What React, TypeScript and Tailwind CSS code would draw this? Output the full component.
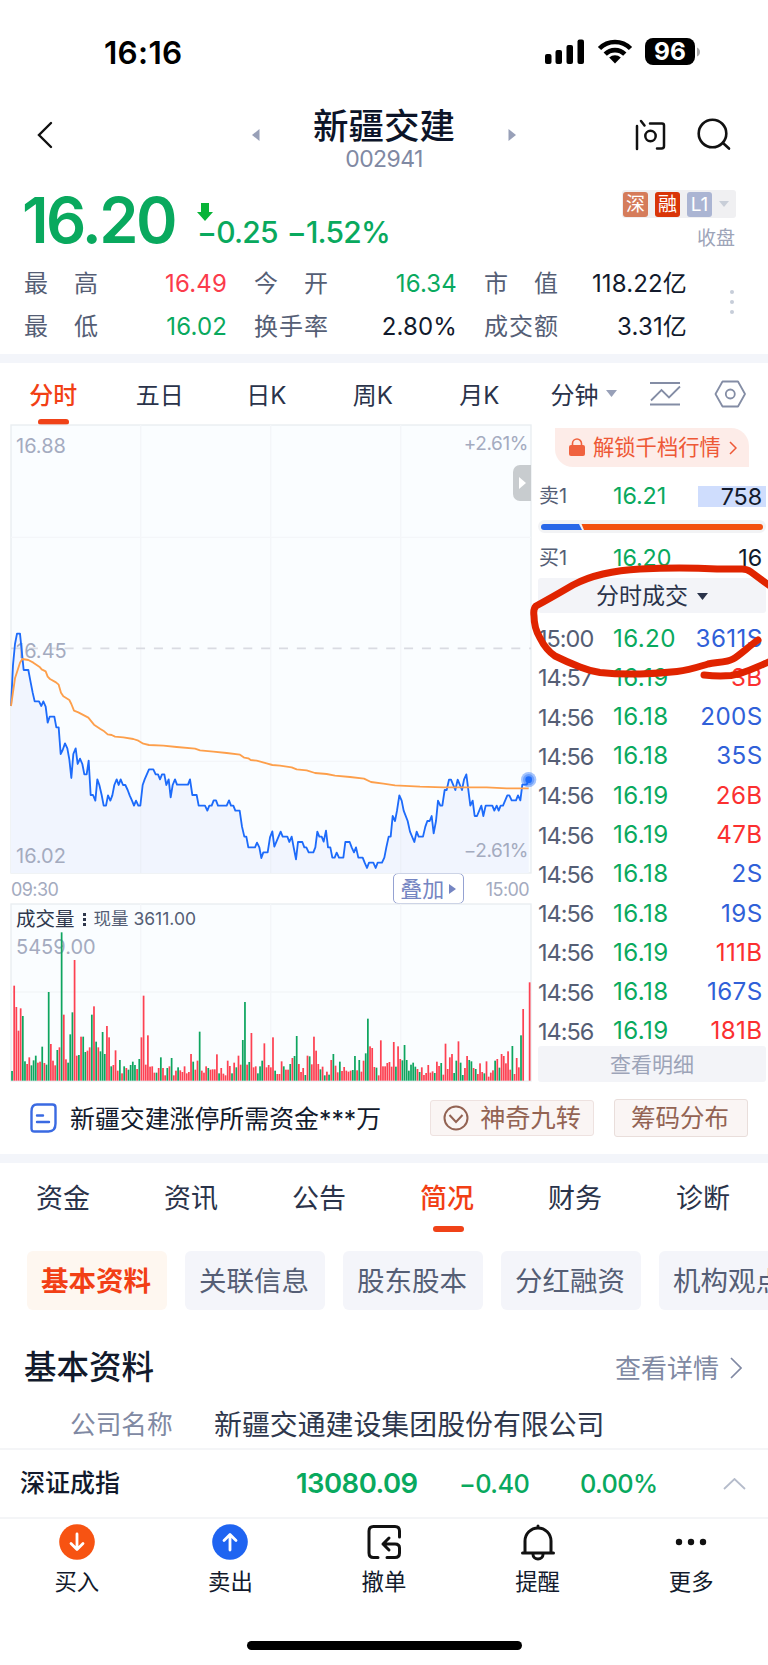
import type { ReactNode } from 'react'
import clsx from 'clsx'

interface Trade {
    time: string; price: string; volume: string; side: 'S' | 'B'
}

const quotes = [
    { label: ['最', '高'], value: '16.49', color: 'text-[#fb3b4b]' },
    { label: ['今', '开'], value: '16.34', color: 'text-[#09a95e]' },
    { label: ['市', '值'], value: '118.22亿', color: 'text-[#121a2c]' },
    { label: ['最', '低'], value: '16.02', color: 'text-[#09a95e]' },
    { label: ['换', '手', '率'], value: '2.80%', color: 'text-[#121a2c]' },
    { label: ['成', '交', '额'], value: '3.31亿', color: 'text-[#121a2c]' },
]

const periods = ['分时', '五日', '日K', '周K', '月K']

const trades: Trade[] = [
    { time: '15:00', price: '16.20', volume: '3611', side: 'S' },
    { time: '14:57', price: '16.19', volume: '3', side: 'B' },
    { time: '14:56', price: '16.18', volume: '200', side: 'S' },
    { time: '14:56', price: '16.18', volume: '35', side: 'S' },
    { time: '14:56', price: '16.19', volume: '26', side: 'B' },
    { time: '14:56', price: '16.19', volume: '47', side: 'B' },
    { time: '14:56', price: '16.18', volume: '2', side: 'S' },
    { time: '14:56', price: '16.18', volume: '19', side: 'S' },
    { time: '14:56', price: '16.19', volume: '111', side: 'B' },
    { time: '14:56', price: '16.18', volume: '167', side: 'S' },
    { time: '14:56', price: '16.19', volume: '181', side: 'B' },
]

const sections = ['资金', '资讯', '公告', '简况', '财务', '诊断']
const topics = ['基本资料', '关联信息', '股东股本', '分红融资', '机构观点']

const priceLine = '33,858 39,735 45,672 51,641 60,641 66,700 71,750 85,750 92,787 98,818 104,844 117,844 124,858 130,844 137,860 143,908 149,890 163,890 169,922 176,922 182,1002 188,990 195,970 202,985 208,1018 214,1074 220,1002 227,985 233,1032 240,1016 247,1032 253,1063 260,1063 266,1022 272,1125 279,1125 286,1142 292,1078 298,1095 305,1125 311,1157 318,1157 324,1126 331,1142 337,1126 343,1095 350,1078 356,1095 362,1078 369,1095 376,1095 383,1110 389,1126 396,1142 402,1157 408,1142 415,1157 421,1157 428,1095 434,1078 447,1048 460,1048 467,1063 474,1063 480,1078 486,1063 493,1063 499,1095 506,1078 512,1132 518,1095 525,1078 531,1094 564,1094 570,1078 577,1125 590,1125 596,1157 615,1157 622,1172 628,1157 635,1157 641,1141 648,1141 654,1157 680,1157 687,1141 693,1157 700,1157 706,1172 719,1172 726,1220 733,1250 739,1250 745,1282 765,1282 771,1268 778,1282 784,1314 790,1297 803,1297 810,1252 817,1234 823,1280 842,1235 848,1250 862,1250 868,1266 875,1250 881,1282 888,1318 894,1266 907,1266 913,1282 919,1282 926,1297 940,1297 946,1282 952,1235 958,1250 965,1250 971,1265 978,1232 984,1282 991,1282 997,1313 1004,1313 1010,1298 1017,1313 1030,1313 1036,1266 1049,1266 1055,1282 1062,1297 1068,1282 1075,1313 1088,1313 1094,1328 1101,1344 1107,1328 1120,1328 1127,1344 1133,1328 1146,1328 1153,1313 1159,1282 1166,1250 1172,1250 1178,1188 1185,1203 1191,1172 1198,1126 1205,1142 1211,1172 1223,1203 1230,1235 1243,1266 1250,1235 1256,1250 1269,1250 1276,1220 1282,1203 1289,1203 1295,1188 1301,1240 1308,1203 1314,1142 1321,1157 1327,1157 1334,1110 1340,1110 1347,1079 1353,1079 1366,1110 1373,1079 1386,1110 1392,1079 1399,1063 1405,1110 1411,1157 1418,1142 1424,1188 1431,1188 1444,1157 1450,1188 1457,1157 1477,1157 1483,1172 1490,1157 1496,1172 1502,1157 1509,1157 1522,1126 1528,1126 1535,1141 1548,1141 1554,1126 1561,1141 1567,1094 1580,1094 1586,1079'
const averageLine = '33,858 45,775 53,750 60,728 67,717 85,720 100,728 120,742 125,748 137,754 143,770 150,777 168,787 176,794 183,818 190,829 208,840 214,852 222,872 235,877 265,893 282,914 300,926 310,932 323,943 335,945 345,950 370,952 400,957 415,962 430,971 447,975 490,977 530,981 585,986 600,991 640,995 680,999 720,1004 733,1013 745,1015 752,1020 770,1022 800,1030 817,1035 840,1037 875,1042 890,1048 920,1051 945,1059 980,1062 1005,1067 1050,1071 1092,1076 1113,1086 1150,1091 1185,1096 1260,1100 1330,1102 1460,1102 1520,1105 1586,1105'

// one entry per minute, r = up, g = down
const volumes = ('g29 r285 r221 r150 r217 g194 g58 r50 r70 g46 g61 g75 r54 r57 g102 r53 g48 g266 r110 r60 r46 g92 r100 g445 r198 r64 g54 g139 g205 r362 '
    + 'r75 g77 r132 g132 g86 r90 r100 g198 r223 g117 r100 g88 g146 g80 r164 r130 g43 r47 r91 r30 g62 r22 g43 r38 g33 g47 g57 g47 r35 g65 '
    + 'r130 r255 r48 r136 r42 r43 r24 g24 r38 g70 r38 r16 g38 r43 g68 r16 r30 g40 r31 r26 r43 r22 r26 r80 g57 r33 r60 g147 r30 r24 '
    + 'r43 g38 r33 r34 r34 r79 g22 r38 r21 r16 r60 r44 g22 r54 g40 r75 r48 g122 g236 r48 g56 r143 r40 r43 g22 g43 g60 r112 r40 r47 '
    + 'r40 r130 g30 r20 r20 r58 g43 r33 r33 g50 r68 g74 g134 r50 r26 r38 g17 r75 g73 r49 r132 r90 r50 g34 r42 g16 r27 g18 r62 g80 '
    + 'r45 r25 g57 r29 r41 r30 r27 r30 g32 g74 r31 g62 r27 r60 g82 g186 r103 r98 r41 g39 r16 r121 r43 r43 r53 r56 r42 r116 g42 r103 '
    + 'r65 g61 g107 g62 g30 g48 g54 g42 r35 g26 r40 r17 r23 r47 r24 r28 g23 r57 r44 g53 r18 r111 r35 r70 r80 g23 g60 r118 g54 g17 '
    + 'r38 r74 g62 g58 r38 g35 r20 r52 r26 g22 r58 r12 r24 r31 g60 r65 g39 r80 r74 r52 r88 r33 g104 r20 r68 r40 g136 r215 r0 r0 r295').split(' ')

function StatusBar() {
    return (
        <div className="h-[98px] pl-[104px] pr-[68px] pt-[33px] flex justify-between items-start">
            <span className="text-[31.500px] leading-[40px] font-semibold text-black tracking-[0.300px]">16:16</span>
            <svg className="mt-[4px]" width="156" height="30" viewBox="544 37 156 30">
                <rect x="545" y="54" width="6.5" height="10" rx="2" />
                <rect x="555.5" y="50" width="6.5" height="14" rx="2" />
                <rect x="566.5" y="45" width="6.5" height="19" rx="2" />
                <rect x="577.5" y="39.5" width="6.5" height="24.5" rx="2" />
                <g fill="none" stroke="#000" strokeWidth="4.6">
                    <path d="M599.5 48.5a21.7 21.7 0 0 1 31 0" />
                    <path d="M605.2 54.2a13.8 13.8 0 0 1 19.6 0" />
                </g>
                <path d="M615 63.4l-5.8-5.8a8.4 8.4 0 0 1 11.6 0z" />
                <rect x="645" y="38" width="50" height="27" rx="8" />
                <path d="M697 47.5q3 1.5 3 4.500t-3 4.500z" fill="#aaa" />
                <text x="670" y="60.3" textAnchor="middle" fill="#fff" fontSize="24.5" fontWeight="700" className="font-['Inter']">96</text>
            </svg>
        </div>
    )
}

function Header() {
    return (
        <header className="h-[84px] flex items-start text-[#0c1428]">
            <svg className="ml-[34px] mt-[21px]" width="22" height="32" viewBox="0 0 22 32" fill="none" stroke="#111" strokeWidth="2.4" strokeLinecap="round">
                <path d="M17 4L5 16l12 12" />
            </svg>
            <svg className="ml-[196px] mt-[31px]" width="8" height="12" viewBox="0 0 8 12"><path d="M7.500 0v12L0 6z" fill="#98a0b8" /></svg>
            <div className="w-[248px] flex flex-col items-center">
                <h1 className="mt-[8px] text-[35.5px] leading-[42px] font-medium">新疆交建</h1>
                <p className="-mt-[1px] text-[23px] leading-[24px] text-[#8089a3] tracking-[-0.6px]">002941</p>
            </div>
            <svg className="mt-[31px]" width="8" height="12" viewBox="0 0 8 12"><path d="M.5 0v12L8 6z" fill="#98a0b8" /></svg>
            <svg className="ml-[118px] mt-[20px]" width="34" height="34" viewBox="634 118 34 34" fill="none" stroke="#111" strokeWidth="2.5" strokeLinecap="round">
                <path d="M637 126v23M641 121l3.500 4.500M650 123.500h12q2 0 2 2V146q0 2.500-2.500 2.500H657" />
                <circle cx="650.5" cy="136" r="5.200" />
            </svg>
            <svg className="ml-[26px] mt-[19px]" width="38" height="36" viewBox="694 117 38 36" fill="none" stroke="#111" strokeWidth="2.600" strokeLinecap="round">
                <circle cx="712.5" cy="133.500" r="13.800" />
                <path d="M723 143l6 5.500" />
            </svg>
        </header>
    )
}

function Badge({ children, className }: { children: ReactNode; className: string }) {
    return <span className={clsx('w-[25px] h-[25px] rounded-[3px] text-white flex items-center justify-center leading-none', className)}>{children}</span>
}

function Summary() {
    return (
        <section className="h-[172px]">
            <div className="h-[80px] flex">
                <span className="shrink-0 pl-[22px] w-[197px] mt-[7px] text-[63px] leading-[62px] font-semibold tracking-[-2.600px] text-[#09a95e]">16.20</span>
                <div className="flex-1 pt-[21px] text-[#09a95e]">
                    <svg width="16" height="18" viewBox="0 0 16 18"><path d="M4 0h8v9h4l-8 9-8-9h4z" fill="#08b438" /></svg>
                    <div className="-mt-[4px] flex gap-[9px] text-[30px] leading-[30px] font-medium tracking-[-0.800px]">
                        <span>−0.25</span><span>−1.52%</span>
                    </div>
                </div>
                <div className="mr-[32px] pt-[8px] flex flex-col items-end">
                    <div className="w-[114px] h-[28px] p-[1px] bg-[#f0f0f2] rounded-[3px] flex items-center gap-[7px]">
                        <Badge className="bg-[#d57c5b] text-[19px]">深</Badge>
                        <Badge className="bg-[#d93508] text-[19px]">融</Badge>
                        <Badge className="bg-[#abb5d3] text-[19px]">L1</Badge>
                        <svg width="10" height="6" viewBox="0 0 10 6"><path d="M0 0h10L5 6z" fill="#c8ced8" /></svg>
                    </div>
                    <span className="mt-[8px] mr-[1px] text-[19px] leading-[26px] text-[#9da4b8]">收盘</span>
                </div>
            </div>
            <div className="flex">
                <div className="pl-[24px] grid grid-cols-[203px_203px_203px] gap-x-[27px] text-[24px]">
                    {quotes.map((q, i) => (
                        <div key={i} className="h-[43px] flex items-center justify-between">
                            <span className="w-[74px] flex justify-between text-[#555e75]">{q.label.map(c => <span key={c}>{c}</span>)}</span>
                            <span className={clsx('tracking-[0.150px]', q.color)}>{q.value}</span>
                        </div>
                    ))}
                </div>
                <div className="ml-[43px] mt-[28px] flex flex-col gap-[6px]">
                    {[0, 1, 2].map(i => <i key={i} className="w-[4px] h-[4px] rounded-full bg-[#c6cdd9]" />)}
                </div>
            </div>
        </section>
    )
}

function PeriodTabs() {
    return (
        <nav className="h-[62px] flex text-[24px] text-[#2a334a]">
            {periods.map((p, i) => (
                <div key={p} className={clsx('w-[106.5px] flex flex-col items-center', i === 0 && 'text-[#f23f15] font-medium')}>
                    <span className="mt-[15px] leading-[36px]">{p}</span>
                    {i === 0 && <i className="mt-[5px] w-[31px] h-[6px] rounded-[3px] bg-[#f04218]" />}
                </div>
            ))}
            <span className="ml-[18px] mt-[15px] leading-[36px]">分钟</span>
            <svg className="ml-[7px] mt-[27px]" width="11" height="7" viewBox="0 0 11 7"><path d="M0 0h11L5.500 7z" fill="#98a0b8" /></svg>
            <svg className="ml-[33px] mt-[19px]" width="31" height="24" viewBox="0 0 31 24" fill="none" stroke="#848da5" strokeWidth="1.800">
                <path d="M0 1h30M0 22.500h30M1 18.500l10.500-10.500 7.500 7.500 11-11" />
            </svg>
            <svg className="ml-[33px] mt-[17px]" width="33" height="28" viewBox="0 0 33 28" fill="none" stroke="#848da5" strokeWidth="1.800" strokeLinejoin="round">
                <path d="M8.500 1.500h15.500l7 12.500-7 12.500H8.500L1.500 14z" />
                <circle cx="16.300" cy="14" r="4.500" />
            </svg>
        </nav>
    )
}

function PriceChart() {
    return (
        <div className="relative w-[520px] h-[448px] text-[20px] leading-[24px] text-[#a4abbf]">
            <svg width="520" height="448" viewBox="33 15 1560 1344" className="block overflow-visible">
                <rect x="33" y="15" width="1560" height="1344" fill="#fafdff" stroke="#e9edf1" strokeWidth="4" />
                <path d="M422 15v1344M812 15v1344M1202 15v1344M33 352h1560M33 1024h1560" stroke="#f4f6f9" strokeWidth="4" />
                <polygon points={`33,1359 ${priceLine} 1586,1359`} fill="#f1f5fe" />
                <path d="M422 1157v202M812 1260v99M1202 1150v209" stroke="#ecf0f8" strokeWidth="4" />
                <path d="M33 685h1560" stroke="#d9dbe2" strokeWidth="5" strokeDasharray="27 26.600" />
            </svg>
            <span className="absolute left-[5px] top-[9px]">16.88</span>
            <span className="absolute left-[5px] top-[214px]">16.45</span>
            <span className="absolute left-[5px] bottom-[5px]">16.02</span>
            <span className="absolute right-[3px] top-[7px] text-[19px] tracking-[-0.400px]">+2.61%</span>
            <span className="absolute right-[3px] bottom-[10px] text-[19px] tracking-[-0.400px]">−2.61%</span>
            <svg width="520" height="448" viewBox="33 15 1560 1344" className="absolute left-0 top-0 overflow-visible" fill="none" strokeLinejoin="round">
                <polyline points={priceLine} stroke="#1d6bfa" strokeWidth="5.500" />
                <polyline points={averageLine} stroke="#fd9f4b" strokeWidth="5.500" />
                <circle cx="1586" cy="1079" r="23" fill="#1d6bfa" fillOpacity="0.400" />
                <circle cx="1586" cy="1079" r="17" fill="#1d6bfa" fillOpacity="0.400" />
                <circle cx="1586" cy="1079" r="10" fill="#1d6bfa" />
            </svg>
            <div className="absolute right-0 top-[40px] w-[18px] h-[36px] rounded-l-[7px] bg-[#c8cccf] flex items-center justify-center">
                <svg width="7" height="12" viewBox="0 0 7 12"><path d="M0 0v12l7-6z" fill="#fff" /></svg>
            </div>
        </div>
    )
}

function VolumeChart() {
    return (
        <div className="relative w-[520px] h-[177px]">
            <svg width="520" height="177" viewBox="33 42 1560 531" className="block overflow-visible">
                <rect x="33" y="42" width="1560" height="531" fill="#fafdff" stroke="#e9edf1" strokeWidth="4" />
                <path d="M422 42v531M812 42v531M1202 42v531M33 306h1560" stroke="#f4f6f9" strokeWidth="4" />
            </svg>
            <div className="absolute left-[5px] top-[3px] flex items-center text-[#555e75] leading-[24px]">
                <span className="text-[19.500px] text-[#2f384d]">成交量</span>
                <i className="mx-[8px] flex flex-col gap-[2px]">
                    {[0, 1, 2].map(i => <b key={i} className="w-[3px] h-[3px] bg-[#2f384d]" />)}
                </i>
                <span className="text-[17.500px]">现量 3611.00</span>
            </div>
            <span className="absolute left-[5px] top-[31px] text-[20px] leading-[24px] text-[#a4abbf]">5459.00</span>
            <svg width="520" height="177" viewBox="33 42 1560 531" className="absolute left-0 top-0 overflow-visible">
                {volumes.map((v, i) => {
                    const h = Number(v.slice(1))
                    return <rect key={i} x={33.500 + i * 6.47} y={572 - h} width="5.200" height={h} fill={v[0] === 'r' ? '#fd4152' : '#0ea55f'} />
                })}
            </svg>
        </div>
    )
}

function TimeAxis() {
    return (
        <div className="h-[31px] flex items-center text-[18px] text-[#a4abbf]">
            <span className="pt-[2px] tracking-[-0.600px]">09:30</span>
            <div className="ml-auto mr-[22px] w-[71px] h-[31px] border-[1.500px] border-[#95a2d2] rounded-[5px] flex items-center justify-center gap-[5px] text-[22px] leading-none text-[#7585c2] bg-white">
                叠加
                <svg width="7" height="10" viewBox="0 0 7 10"><path d="M0 0v10l7-5z" fill="#7585c2" /></svg>
            </div>
            <span className="pt-[2px] mr-[2px] tracking-[-0.600px]">15:00</span>
        </div>
    )
}

function Level({ name, price, children, className }: { name: string; price: string; children: ReactNode; className?: string }) {
    return (
        <div className={clsx('flex h-[22px] items-center text-[23.300px] leading-[22px] tracking-[-0.100px]', className)}>
            <span className="w-[75px] pl-[1px] text-[20px] text-[#555e75]">{name}</span>
            <span className="text-[#09a95e]">{price}</span>
            {children}
        </div>
    )
}

function OrderBook() {
    return (
        <div className="relative w-[228px] h-[658px] mr-[2px]">
            <div className="ml-[17px] mt-[3px] w-[194px] h-[39px] bg-[#fdece8] rounded-tr-[18px] rounded-bl-[18px] flex items-center pl-[14px] text-[21.300px] text-[#ee5836]">
                <svg className="mr-[8px] -mt-[1px]" width="16" height="18" viewBox="0 0 16 18">
                    <rect y="7" width="16" height="11" rx="2" fill="#f0623f" />
                    <path d="M3.500 8V5.500a4.500 4.500 0 0 1 9 0V8" fill="none" stroke="#f0623f" strokeWidth="1.600" />
                </svg>
                <span className="leading-none">解锁千档行情</span>
                <svg className="ml-[8px]" width="8" height="14" viewBox="0 0 8 14" fill="none" stroke="#ee5836" strokeWidth="1.500"><path d="M1 1l6 6-6 6" /></svg>
            </div>
            <Level name="卖1" price="16.21" className="mt-[18px]">
                <span className="ml-auto w-[68px] pr-[4px] h-[21px] leading-[21px] bg-[#cfddfd] text-right text-[#121a2c]">758</span>
            </Level>
            <div className="mt-[13px] h-[13px] rounded-full bg-[#f2f3f5] px-[3px] flex items-center">
                <svg width="222" height="6" viewBox="0 0 222 6">
                    <path d="M3 0h35l3 6H3a3 3 0 0 1 0-6z" fill="#2867e8" />
                    <path d="M40.500 0H219a3 3 0 0 1 0 6H43z" fill="#f3500f" />
                </svg>
            </div>
            <Level name="买1" price="16.20" className="mt-[14px]">
                <span className="ml-auto pr-[4px] text-[#121a2c]">16</span>
            </Level>
            <div className="mt-[9px] h-[35px] pt-[2px] rounded-[3px] bg-[#f3f4f8] flex items-center justify-center gap-[9px] text-[23px] leading-none text-[#2a334a]">
                分时成交
                <svg width="11" height="7" viewBox="0 0 11 7"><path d="M0 0h11L5.500 7z" fill="#2a334a" /></svg>
            </div>
            <div className="mt-[6px]">
                {trades.map((t, i) => (
                    <div key={i} className="h-[39.300px] flex items-center text-[24.200px] tracking-[0.350px]">
                        <span className="w-[75px] text-[#555e75] text-[23.500px] tracking-[-1px]">{t.time}</span>
                        <span className="text-[#09a95e]">{t.price}</span>
                        <span className={clsx('ml-auto pr-[3.500px]', t.side === 'S' ? 'text-[#3060d8]' : 'text-[#fb3030]')}>{t.volume}{t.side}</span>
                    </div>
                ))}
            </div>
            <div className="-mt-[5px] relative h-[36px] rounded-[3px] bg-[#f3f4f8] flex items-center justify-center text-[21px] text-[#9da4b8]">查看明细</div>
            {/* hand-drawn marker around the latest trade */}
            <svg className="absolute -left-[8px] top-[133px] overflow-visible" width="238" height="130" viewBox="530 558 238 130" fill="none" stroke="#e02400" strokeWidth="7" strokeLinecap="round" strokeLinejoin="round">
                <path d="M758 640C748 647 740 655 733 659C726 663 716 662 708 664C698 667 690 670 677 671.500Q658 673.500 640 674Q618 674.500 600 672.500C590 671 585 669 580 667Q567 662 555 656Q546 650 540 638Q534 628 534 616Q533 609 536 606Q549 599 573 585Q586 578 603 574Q620 570 640 569Q680 567 717 569H742Q747 569 751 572L770 586" />
                <path d="M704 675q14 1.500 27 .5c14-2 24-8 39-14" />
            </svg>
        </div>
    )
}

function NewsRow() {
    return (
        <div className="h-[71px] pl-[30px] pt-[16px] flex items-start">
            <svg className="mt-[4px]" width="27" height="30" viewBox="0 0 27 30" fill="none" stroke="#3a6ae2" strokeWidth="2.400">
                <path d="M7 1.500h15.500q3 0 3 3v16q0 8-7 8h-14q-3 0-3-3v-17q0-7 5.500-7z" />
                <path d="M7 12.500h6M7 19h12" strokeLinecap="round" />
            </svg>
            <span className="ml-[13px] mt-[1px] w-[348px] text-[24.900px] leading-[38px] text-[#121a2c] whitespace-nowrap">新疆交建涨停所需资金***万</span>
            <div className="ml-[12px] mt-px w-[164px] h-[36px] rounded-[3px] border border-[#eee2e0] bg-[#faf5f4] flex items-center justify-center gap-[11px] text-[25.200px] leading-none text-[#936353]">
                <svg width="26" height="26" viewBox="0 0 26 26" fill="none" stroke="#936353" strokeWidth="2">
                    <circle cx="13" cy="13" r="11.500" />
                    <path d="M6.500 10l6.500 7 6.500-7" />
                </svg>
                <span className="pt-[1px]">神奇九转</span>
            </div>
            <div className="ml-[20px] w-[134px] h-[38px] rounded-[3px] border border-[#e9dedb] bg-[#faf5f4] flex items-center justify-center pr-[2px] pt-[1px] text-[24.500px] leading-none text-[#936353]">筹码分布</div>
        </div>
    )
}

function Profile() {
    return (
        <section className="h-[285px] overflow-hidden">
            <nav className="h-[88px] grid grid-cols-6 text-[27px] text-[#2a334a]">
                {sections.map(s => (
                    <div key={s} className={clsx('flex flex-col items-center', s === '简况' && 'text-[#f23f15] font-medium')}>
                        <span className="mt-[16px] mr-[2px] leading-[40px]">{s}</span>
                        {s === '简况' && <i className="mt-[7px] w-[31px] h-[6px] rounded-[3px] bg-[#f04218]" />}
                    </div>
                ))}
            </nav>
            <div className="pl-[27px] flex gap-[18px] text-[27.500px] text-[#555e75]">
                {topics.map((t, i) => (
                    <span key={t} className={clsx('shrink-0 w-[140px] h-[59px] pt-[2px] pr-[2px] rounded-[6px] flex items-center justify-center leading-none', i === 0 ? 'bg-[#fef7f0] text-[#f23f15] font-bold' : 'bg-[#f4f5fa]')}>{t}</span>
                ))}
            </div>
            <div className="mt-[36px] h-[44px] pl-[24px] pr-[26px] flex items-center justify-between">
                <h2 className="text-[32.500px] leading-[44px] font-medium text-[#121a2c]">基本资料</h2>
                <span className="flex items-center gap-[11px] text-[26px] leading-[44px] text-[#8089a3]">
                    <span className="pt-[2px]">查看详情</span>
                    <svg width="12" height="22" viewBox="0 0 12 22" fill="none" stroke="#8089a3" strokeWidth="1.700"><path d="M1 1l10 10L1 21" /></svg>
                </span>
            </div>
            <div className="mt-[15px] pl-[70px] flex items-center leading-[40px]">
                <span className="w-[144px] text-[25.700px] text-[#8089a3]">公司名称</span>
                <span className="text-[27.900px] text-[#2f384d]">新疆交通建设集团股份有限公司</span>
            </div>
        </section>
    )
}

function IndexBar() {
    return (
        <div className="h-[69px] border-t-2 border-[#f4f5f7] flex items-center font-medium text-[#09a95e]">
            <span className="w-[296px] pl-[20px] text-[25px] text-[#121a2c]">深证成指</span>
            <span className="w-[163px] text-[27.500px] font-semibold tracking-[-0.550px]">13080.09</span>
            <span className="w-[121px] text-[25.300px] tracking-[-0.600px]">−0.40</span>
            <span className="w-[143px] text-[25.300px] tracking-[-0.600px]">0.00%</span>
            <svg width="23" height="12" viewBox="0 0 23 12" fill="none" stroke="#b5bccb" strokeWidth="1.800"><path d="M1 11L11.500 1 22 11" /></svg>
        </div>
    )
}

function NavItem({ label, children }: { label: string; children: ReactNode }) {
    return (
        <div className="flex-1 flex flex-col items-center">
            <svg className="mt-[4px]" width="38" height="38" viewBox="0 0 38 38" fill="none" stroke="#111" strokeWidth="3" strokeLinecap="round" strokeLinejoin="round">{children}</svg>
            <span className="mt-[5px] text-[22.400px] leading-[32px] text-[#121a2c]">{label}</span>
        </div>
    )
}

function BottomNav() {
    return (
        <nav className="h-[124px] border-t-2 border-[#f4f5f7] flex">
            <NavItem label="买入">
                <circle cx="19" cy="19" r="17.800" fill="#f75312" stroke="none" />
                <path d="M19 11v15M13 20.500l6 6 6-6" stroke="#fff" strokeWidth="2.800" />
            </NavItem>
            <NavItem label="卖出">
                <circle cx="19" cy="19" r="17.800" fill="#1f64f1" stroke="none" />
                <path d="M19 27V12M13 17.500l6-6 6 6" stroke="#fff" strokeWidth="2.800" />
            </NavItem>
            <NavItem label="撤单">
                <path d="M13 34.500H8.500Q4 34.500 4 30V8q0-4.500 4.500-4.500H30q4.500 0 4.500 4.500v6" />
                <path d="M24 15l-6 6 6 6M18 21h12q4.500 0 4.500 4v5q0 4.500-4.500 4.500h-8" />
            </NavItem>
            <NavItem label="提醒">
                <path d="M19 3v2M6 29V18a13 13 0 0 1 26 0v11M3.500 30h31" />
                <path d="M14 31.500a5 4.500 0 0 0 10 0" />
            </NavItem>
            <NavItem label="更多">
                <g fill="#111" stroke="none"><circle cx="7" cy="19" r="3.200" /><circle cx="19" cy="19" r="3.200" /><circle cx="31" cy="19" r="3.200" /></g>
            </NavItem>
        </nav>
    )
}

export default function App() {
    return (
        <div className="w-[768px] h-[1665px] overflow-hidden bg-white font-['Inter','Noto_Sans_CJK_SC',sans-serif]">
            <StatusBar />
            <Header />
            <Summary />
            <div className="h-[9px] bg-[#f3f5fa]" />
            <PeriodTabs />
            <div className="h-[658px] flex justify-between">
                <div className="ml-[11px] w-[520px]">
                    <PriceChart />
                    <TimeAxis />
                    <VolumeChart />
                </div>
                <OrderBook />
            </div>
            <NewsRow />
            <div className="h-[9px] bg-[#f3f5fa]" />
            <Profile />
            <IndexBar />
            <BottomNav />
            <div className="mx-auto w-[275px] h-[9px] rounded-full bg-black" />
        </div>
    )
}
